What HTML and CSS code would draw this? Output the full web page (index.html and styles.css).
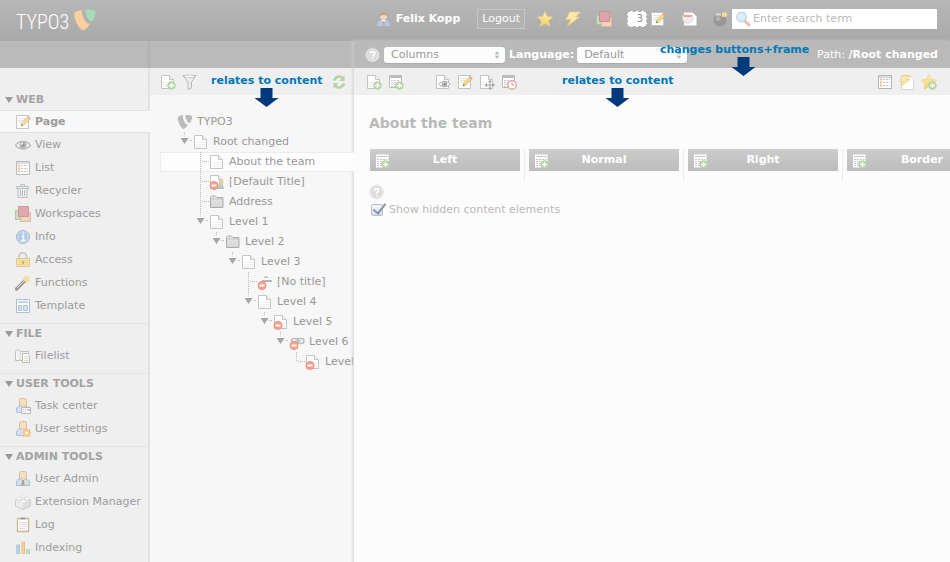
FILE: index.html
```html
<!DOCTYPE html>
<html lang="en">
<head>
<meta charset="utf-8">
<title>TYPO3 Backend</title>
<link rel="stylesheet" href="styles.css">
</head>
<body>
<svg class="sprite" aria-hidden="true">
  <defs>
    <linearGradient id="g-star" x1="0" y1="0" x2="0" y2="1"><stop offset="0" stop-color="#fdf0b0"/><stop offset="1" stop-color="#f3cf63"/></linearGradient>
    <linearGradient id="g-fold" x1="0" y1="0" x2="0" y2="1"><stop offset="0" stop-color="#e9e9e9"/><stop offset="1" stop-color="#d6d6d6"/></linearGradient>
  </defs>
  <symbol id="sheet" viewBox="0 0 16 16"><path d="M1.500 1.500H9.500L13.500 5.500V14.500H1.500Z" fill="#fff" stroke="#c3c3c3"/><path d="M9.500 1.500V5.500H13.500" fill="#f2f2f2" stroke="#c3c3c3"/><path d="M3 8.500h9M3 10.500h9M3 12.500h9" stroke="#eee"/></symbol>
  <symbol id="plus" viewBox="0 0 16 16"><circle cx="11.500" cy="11.500" r="4.200" fill="#b5d5a4"/><path d="M11.500 9v5M9 11.500h5" stroke="#fff" stroke-width="1.400"/></symbol>
  <symbol id="deny" viewBox="0 0 16 16"><circle cx="5" cy="11.500" r="4" fill="#f2a596" stroke="#ea9080"/><path d="M2.500 11.500h5" stroke="#fff" stroke-width="1.800"/></symbol>
  <symbol id="grid" viewBox="0 0 16 16"><path d="M1.500 1.500h12v12h-12z" fill="#fff" stroke="#bcbcbc"/><path d="M2 3h11" stroke="#bcbcbc" stroke-width="2"/><path d="M3 6.500h9M3 8.500h9M3 10.500h9M3 12.500h6" stroke="#c9c9c9" stroke-dasharray="2 1"/></symbol>
  <symbol id="page-new" viewBox="0 0 16 16"><use href="#sheet"/><use href="#plus"/></symbol>
  <symbol id="page-off" viewBox="0 0 16 16"><use href="#sheet"/><use href="#deny"/></symbol>
  <symbol id="page-group" viewBox="0 0 16 16"><use href="#sheet"/><circle cx="12" cy="8" r="2.500" fill="#e8cba8"/><path d="M8 15c0-6 7-6 7 0z" fill="#aac6de"/><path d="M8 12l3-3 2 3-2 3z" fill="#b9d4a2"/><use href="#deny"/></symbol>
  <symbol id="grid-new" viewBox="0 0 16 16"><use href="#grid"/><use href="#plus"/></symbol>
  <symbol id="col-new" viewBox="0 0 16 16"><path d="M2 1.500h12.500v13H2z" fill="#fff"/><path d="M3 3.500h10.500" stroke="#c6c6c6"/><path d="M3 6.500h10.500M3 8.500h10.500M3 10.500h10.500M3 12.500h8" stroke="#c6c6c6" stroke-dasharray="2 1"/><use href="#plus"/></symbol>
  <symbol id="pencil" viewBox="0 0 16 16"><path d="M6 12l1-3.500 6-6 2.200 2.200-6 6z" fill="#f6dc8b" stroke="#c8a85c" stroke-width=".7"/><path d="M12 3.500l1.500-1.500 2.200 2.200L14.200 5.700z" fill="#eba9a0"/><path d="M6 12l.6-2L8 11.400z" fill="#777"/></symbol>
  <symbol id="page-edit" viewBox="0 0 16 16"><path d="M1.500 1.500h12v13h-12z" fill="#fff" stroke="#c2c2c2"/><path d="M3 4.500h7M3 6.500h5M3 8.500h3" stroke="#e4e4e4"/><use href="#pencil"/></symbol>
  <symbol id="eye" viewBox="0 0 16 16"><path d="M.600 8.300C4 3 12 3 15.400 8.300 12 13 4 13 .600 8.300Z" fill="#f7f7f7" stroke="#b0b0b0" stroke-width="1.300"/><circle cx="8" cy="8" r="3.600" fill="#b3b3b3"/><circle cx="8" cy="8" r="1.700" fill="#8d8d8d"/><circle cx="7" cy="6.800" r="1" fill="#f2f2f2"/></symbol>
  <symbol id="page-view" viewBox="0 0 16 16"><use href="#sheet"/><svg x="3" y="4" width="13" height="12"><use href="#eye"/></svg></symbol>
  <symbol id="page-move" viewBox="0 0 16 16"><use href="#sheet"/><path d="M11 7v8M7 11h8" stroke="#a2a2a2"/><path d="M11 5.800l2 2.200H9zM11 16l2-2.200H9zM5.800 11L8 9v4zM16 11l-2.200-2v4z" fill="#a2a2a2"/></symbol>
  <symbol id="history" viewBox="0 0 16 16"><use href="#grid"/><circle cx="11" cy="11" r="4.200" fill="#fff" stroke="#eca296" stroke-width="1.400"/><path d="M11 8.500V11h2" fill="none" stroke="#999"/></symbol>
  <symbol id="funnel" viewBox="0 0 16 16"><path d="M1 1.500H14L9.500 8v6L6 15.500V8Z" fill="#ececec" stroke="#b7b7b7"/><ellipse cx="7.500" cy="2.300" rx="6" ry="1.200" fill="#fff" stroke="#bdbdbd" stroke-width=".8"/></symbol>
  <symbol id="refresh" viewBox="0 0 16 16"><path d="M3 6.500C5 1.500 10 1.500 12 4.500M13 9.500C11 14.500 6 14.500 4 11.500" fill="none" stroke="#b5d3a3" stroke-width="2.600"/><path d="M13.500 1.500V7H8.500zM2.500 14.500V9h5z" fill="#b5d3a3"/></symbol>
  <symbol id="list" viewBox="0 0 16 16"><path d="M1.500 1.500h13v13h-13z" fill="#fff" stroke="#b5b5b5"/><path d="M2 3h12" stroke="#c4d2dd" stroke-width="1.500"/><path d="M3 5.500h2M3 8.500h2M3 11.500h2" stroke="#f3bd80" stroke-width="2"/><path d="M6 5.500h7M6 8.500h7M6 11.500h7" stroke="#c2c2c2" stroke-dasharray="2 1"/></symbol>
  <symbol id="trash" viewBox="0 0 16 16"><path d="M5.500 3V1.500h4V3M1.500 3.500h12v2h-12zM3 6v8.500h9V6M5.500 7v6M7.500 7v6M9.500 7v6" fill="none" stroke="#b5b9bf"/></symbol>
  <symbol id="spaces" viewBox="0 0 16 16"><path d="M.500 4.500h10v9h-10z" fill="#c7dcc1" stroke="#a8c3a2"/><path d="M5.500 6.500h10v9h-10z" fill="#f2d2b8" stroke="#dbb697"/><path d="M3.500.500h10v10h-10z" fill="#dfa3aa" stroke="#cb8f97"/></symbol>
  <symbol id="info" viewBox="0 0 16 16"><circle cx="8" cy="8" r="6.500" fill="#a9c7e8" stroke="#9cb3cf"/><circle cx="8" cy="8" r="5.300" fill="none" stroke="#dbe8f5" stroke-width=".8"/><path d="M6.500 7H8.500v4M6.300 11.400h4M7.500 4.500h1.500" fill="none" stroke="#fff" stroke-width="1.500"/></symbol>
  <symbol id="lock" viewBox="0 0 16 16"><path d="M4 7V4.500a3.500 3.500 0 0 1 7.500 0V7" fill="none" stroke="#c9c9c9" stroke-width="2"/><path d="M1.500 6.500h13v8h-13z" fill="#f9e3a4" stroke="#dfc389"/><path d="M3 8.500h10M3 10.500h10M3 12.500h10" stroke="#f1cf80"/><path d="M7 9h2v3H7z" fill="#c7ab73"/></symbol>
  <symbol id="wand" viewBox="0 0 16 16"><path d="M1.500 14L10 5.500" stroke="#8d8d8d" stroke-width="3.200" stroke-linecap="round"/><path d="M2 13L9.500 5.500" stroke="#e2e2e2"/><path d="M11 0l1 2.500L15 1l-1.300 3L16 5.500l-3 .5-.5 3-2-2.500L8 6l1.500-2L8.500 2z" fill="#f9dd8e"/></symbol>
  <symbol id="template" viewBox="0 0 16 16"><path d="M1.500 1.500h13v13h-13z" fill="#fff" stroke="#a3b9d6"/><path d="M3 4h10" stroke="#bcd2ee" stroke-width="2"/><path d="M3.500 7.500h3v5h-3zM8.500 7.500h4v5h-4z" fill="#cfe0f5" stroke="#a3bbdc"/></symbol>
  <symbol id="folder" viewBox="0 0 16 16"><path d="M1.500 13.500v-10l1-1.500h4l1.500 1.500h6v10z" fill="url(#g-fold)" stroke="#ababab"/><path d="M2 5h12" stroke="#c4c4c4"/></symbol>
  <symbol id="files" viewBox="0 0 16 16"><path d="M.500 12.500v-9l1-1.500h3l1 1.500h8v9z" fill="#f5f5f5" stroke="#bcbcbc"/><path d="M5 3.500v9" stroke="#d0d0d0"/><path d="M7.500 5.500h5l2 2v7h-7z" fill="#fff" stroke="#b5b5b5"/><path d="M9 8.500h1M9 10.500h1M9 12.500h1" stroke="#f0bd80"/><path d="M11 8.500h2M11 10.500h2M11 12.500h2" stroke="#bcc9b0"/></symbol>
  <symbol id="user" viewBox="0 0 16 16"><path d="M1.500 14.500V10L4 8h7l3.500 2v4.500z" fill="#cfe0f2" stroke="#a5bedb"/><rect x="4.500" y=".500" width="7" height="7.500" rx="2" fill="#f8dec0" stroke="#dcb48c"/><path d="M6.500 8.500L8 10l1.500-1.500" fill="#fff"/></symbol>
  <symbol id="user-task" viewBox="0 0 16 16"><use href="#user"/><path d="M6.500 9.500h9v6h-9z" fill="#fff" stroke="#b4b4b4"/><path d="M8 11.500h4M8 13.500h4" stroke="#a9b8cc" stroke-dasharray="1 1"/><path d="M12.500 11h2v2h-2z" fill="#ec8f8f"/></symbol>
  <symbol id="user-set" viewBox="0 0 16 16"><use href="#user"/><path d="M11.500 7.500l1.200 1.500 2.300-.500-.500 2.300 1.500 1.200-1.500 1.200.5 2.300-2.300-.5-1.200 1.500-1.200-1.500-2.300.5.500-2.300L7 12l1.500-1.200L8 8.500l2.300.5z" fill="#f7cb86" stroke="#e9b168" stroke-width=".5"/><circle cx="11.500" cy="12" r="1.200" fill="#fff"/></symbol>
  <symbol id="user-admin" viewBox="0 0 16 16"><use href="#user"/><path d="M7 9h2l.7 5.500H6.500z" fill="#b69a72"/></symbol>
  <symbol id="felix" viewBox="0 0 16 16"><path d="M1 15c0-5 3-6 6.500-6s6.500 1 6.500 6z" fill="#aecbe8"/><path d="M5.500 9l2 3 2-3z" fill="#fff"/><path d="M7 10h1.200l.8 4.500H6.500z" fill="#d99b8b"/><circle cx="7.500" cy="5.500" r="3.500" fill="#f0d3b8"/><path d="M3.500 5.500C3 0 12 0 11.500 5.500 10 3.500 6 3.500 3.500 5.500Z" fill="#c2a184"/></symbol>
  <symbol id="brick" viewBox="0 0 16 16"><path d="M.500 6L8 3.500l7.500 2.500v6L8 15.500.500 12z" fill="#dedede" stroke="#c8c8c8"/><path d="M1 6.300L8 9l7-2.700L8 4z" fill="#f8f8f8"/><path d="M1 6.500L8 9v6L1 12z" fill="#ebebeb"/><path d="M5.700 2.200v2.300c0 1 4.600 1 4.600 0V2.200M2 4.500v2c0 1 4.500 1 4.500 0v-2M9.500 4.500v2c0 1 4.500 1 4.500 0v-2" fill="#ececec" stroke="#d0d0d0" stroke-width=".6"/><ellipse cx="8" cy="2.200" rx="2.300" ry="1.200" fill="#fff" stroke="#ccc" stroke-width=".6"/><ellipse cx="4.200" cy="4.500" rx="2.300" ry="1.200" fill="#fff" stroke="#ccc" stroke-width=".6"/><ellipse cx="11.700" cy="4.500" rx="2.300" ry="1.200" fill="#fff" stroke="#ccc" stroke-width=".6"/></symbol>
  <symbol id="log" viewBox="0 0 16 16"><path d="M2.500 1.500h11v13h-11z" fill="#fff" stroke="#c9b387" stroke-width="1.300"/><path d="M5.500 1.500h5" stroke="#999" stroke-width="2"/><path d="M4.500 5.500h7M4.500 7.500h7M4.500 9.500h7M4.500 11.500h5" stroke="#b9bdc6" stroke-dasharray="1 1"/></symbol>
  <symbol id="bars" viewBox="0 0 16 16"><path d="M1 4.500h4v9.500H1z" fill="#b2cdea"/><path d="M6 1.500h4V14H6z" fill="#f7c98e"/><path d="M11 9h4v5h-4z" fill="#c0dab4"/><path d="M4.500 5v9M9.500 2v12M14.500 9.500V14" stroke="#999" stroke-opacity=".3"/></symbol>
  <symbol id="star" viewBox="0 0 16 16"><path d="M8 .500l2.300 5 5.300.600-4 3.700 1.200 5.500L8 12.600l-4.800 2.700 1.200-5.500-4-3.700 5.300-.600z" fill="url(#g-star)" stroke="#e9cf83" stroke-width=".7"/></symbol>
  <symbol id="star-new" viewBox="0 0 16 16"><use href="#star"/><use href="#plus"/></symbol>
  <symbol id="bolt" viewBox="0 0 16 16"><path d="M4.500 1h11L10.500 6h4L2.500 15l3.500-6.500H.8z" fill="#f9e9ad" stroke="#edc774" stroke-width=".9"/></symbol>
  <symbol id="page-bolt" viewBox="0 0 16 16"><path d="M2.500 1.500h8l4 4v10h-12z" fill="#fff" stroke="#d6d6d6"/><svg x="0" y="1" width="12" height="12"><use href="#bolt"/></svg></symbol>
  <symbol id="page-cup" viewBox="0 0 16 16"><path d="M3 1.500h8.500l4 4v9H3z" fill="#fff"/><path d="M1 4.500h11l-1 5.500-3 2H5L2 10z" fill="#eee" stroke="#c9c9c9" stroke-width=".7"/><ellipse cx="6.500" cy="5" rx="4.500" ry="1.300" fill="#d9aaa0"/></symbol>
  <symbol id="bomb" viewBox="0 0 16 16"><circle cx="8" cy="9" r="6.500" fill="#979797"/><circle cx="6" cy="7.500" r="2.500" fill="#b2b2b2"/><path d="M4 3.500h5" stroke="#ddd" stroke-width="2"/><path d="M10 3l.5-2L12 2l2-1.500.3 2L16 4l-2 .7L13.500 7 12 5.500 9.500 6z" fill="#f7dc95"/></symbol>
  <symbol id="lens" viewBox="0 0 16 16"><path d="M9.500 9.500L14 14" stroke="#f0c1a4" stroke-width="3" stroke-linecap="round"/><circle cx="6.500" cy="6" r="4.800" fill="#dcedfb" stroke="#bed2e7" stroke-width="1.300"/></symbol>
  <symbol id="help" viewBox="0 0 16 16"><circle cx="7.500" cy="8" r="6.300" fill="#dcdcdc" stroke="#ececec"/><circle cx="7.500" cy="8" r="7" fill="none" stroke="#d4d4d4" stroke-width=".5"/><path d="M5.500 6.500C5.500 4 9.800 4 9.800 6.400 9.800 8 7.700 8 7.700 9.600M7.700 10.700v1.500" fill="none" stroke="#fff" stroke-width="1.700"/></symbol>
  <symbol id="swirl" viewBox="0 0 16 16"><path d="M11.200 10.300c-.3.100-.5.100-.8.100-2.300 0-4.600-5.700-4.600-8 0-.8.200-1.100.5-1.300C3.800 1.400 2 2.100 1.100 3 .9 3.300.8 3.800.8 4.400c0 3.300 3.500 10.500 6 10.500 1.200 0 3.100-1.900 4.400-4.600"/><path class="tip" d="M10 .900c3 0 5 .500 5 2 0 2.800-1.800 6.200-2.700 6.200-1.700 0-4-4.700-4-7 0-1 .500-1.200 1.700-1.200"/></symbol>
  <symbol id="divider" viewBox="0 0 16 16"><path d="M5 7h10" stroke="#b5b5b5" stroke-width="2"/><path d="M6 4l3-2.500L12 4z" fill="#c4c4c4"/><use href="#deny"/></symbol>
  <symbol id="chain" viewBox="0 0 16 16"><rect x="2.500" y="4.500" width="7" height="5" rx="2.500" fill="none" stroke="#bcbcbc" stroke-width="1.500"/><rect x="8.500" y="4.500" width="6.500" height="5" rx="2.500" fill="none" stroke="#bcbcbc" stroke-width="1.500"/><path d="M6 7h6" stroke="#bcbcbc"/><use href="#deny"/></symbol>
  <symbol id="open" viewBox="0 0 16 20"><path d="M7.500 0v4" stroke="#b9b9b9" stroke-dasharray="1 1"/><path d="M12 8.500h4" stroke="#b9b9b9" stroke-dasharray="1 1"/><path d="M3.500 6h8L7.500 12z" fill="#a6a6a6"/></symbol>
  <symbol id="leaf" viewBox="0 0 16 20"><path d="M7.500 0v20M9 9.500h7" stroke="#b9b9b9" stroke-dasharray="1 1"/></symbol>
  <symbol id="last" viewBox="0 0 16 20"><path d="M7.500 0v10M9 9.500h7" stroke="#b9b9b9" stroke-dasharray="1 1"/></symbol>
  <symbol id="updown" viewBox="0 0 8 10"><path d="M1 4l3-4 3 4zM1 6l3 4 3-4z" fill="#b5b5b5"/></symbol>
  <symbol id="arrow" viewBox="0 0 25 19"><path d="M6.500 0h12v10h6L12.500 19 .500 10h6z" fill="#003a7d"/></symbol>
</svg>

<header class="topbar">
  <a class="logo" href="#"><span>TYPO3</span><svg class="logo-mark"><use href="#swirl"/></svg></a>
  <div class="tools">
    <span class="who"><svg class="icon"><use href="#felix"/></svg><b>Felix Kopp</b></span>
    <button class="logout" type="button">Logout</button>
    <div class="pair">
      <button class="tool" type="button" aria-label="Bookmarks"><svg class="icon"><use href="#star"/></svg></button>
      <button class="tool" type="button" aria-label="Clear cache"><svg class="icon"><use href="#bolt"/></svg></button>
    </div>
    <button class="tool" type="button" aria-label="Workspaces"><svg class="icon"><use href="#spaces"/></svg></button>
    <button class="tool open-docs" type="button" aria-label="Open documents"><span class="count">3</span><svg class="icon"><use href="#page-edit"/></svg></button>
    <button class="tool" type="button" aria-label="Tasks"><svg class="icon"><use href="#page-cup"/></svg></button>
    <div class="find">
      <button class="tool" type="button" aria-label="Debug"><svg class="icon"><use href="#bomb"/></svg></button>
      <label class="search"><svg class="icon"><use href="#lens"/></svg><input type="search" placeholder="Enter search term" aria-label="Search"></label>
    </div>
  </div>
</header>

<div class="workspace">
  <nav class="modules">
    <div class="bar"></div>
    <section>
      <h2>WEB</h2>
      <a class="current" href="#"><svg class="icon"><use href="#page-edit"/></svg>Page</a>
      <a href="#"><svg class="icon"><use href="#eye"/></svg>View</a>
      <a href="#"><svg class="icon"><use href="#list"/></svg>List</a>
      <a href="#"><svg class="icon"><use href="#trash"/></svg>Recycler</a>
      <a href="#"><svg class="icon"><use href="#spaces"/></svg>Workspaces</a>
      <a href="#"><svg class="icon"><use href="#info"/></svg>Info</a>
      <a href="#"><svg class="icon"><use href="#lock"/></svg>Access</a>
      <a href="#"><svg class="icon"><use href="#wand"/></svg>Functions</a>
      <a href="#"><svg class="icon"><use href="#template"/></svg>Template</a>
    </section>
    <section>
      <h2>FILE</h2>
      <a href="#"><svg class="icon"><use href="#files"/></svg>Filelist</a>
    </section>
    <section>
      <h2>USER TOOLS</h2>
      <a href="#"><svg class="icon"><use href="#user-task"/></svg>Task center</a>
      <a href="#"><svg class="icon"><use href="#user-set"/></svg>User settings</a>
    </section>
    <section>
      <h2>ADMIN TOOLS</h2>
      <a href="#"><svg class="icon"><use href="#user-admin"/></svg>User Admin</a>
      <a href="#"><svg class="icon"><use href="#brick"/></svg>Extension Manager</a>
      <a href="#"><svg class="icon"><use href="#log"/></svg>Log</a>
      <a href="#"><svg class="icon"><use href="#bars"/></svg>Indexing</a>
    </section>
  </nav>

  <aside class="tree">
    <div class="bar"></div>
    <div class="toolbar">
      <button class="tool" type="button" aria-label="New page"><svg class="icon"><use href="#page-new"/></svg></button>
      <button class="tool" type="button" aria-label="Filter"><svg class="icon"><use href="#funnel"/></svg></button>
      <button class="tool end" type="button" aria-label="Refresh"><svg class="icon"><use href="#refresh"/></svg></button>
    </div>
    <ul>
      <li class="d0"><svg class="twig"></svg><svg class="icon grey"><use href="#swirl"/></svg><span>TYPO3</span></li>
      <li class="d1"><svg class="twig"><use href="#open"/></svg><svg class="icon"><use href="#sheet"/></svg><span>Root changed</span></li>
      <li class="d2 selected"><svg class="twig"><use href="#leaf"/></svg><svg class="icon"><use href="#sheet"/></svg><span>About the team</span></li>
      <li class="d2"><svg class="twig"><use href="#leaf"/></svg><svg class="icon"><use href="#page-group"/></svg><span>[Default Title]</span></li>
      <li class="d2"><svg class="twig"><use href="#leaf"/></svg><svg class="icon"><use href="#folder"/></svg><span>Address</span></li>
      <li class="d2"><svg class="twig"><use href="#open"/></svg><svg class="icon"><use href="#sheet"/></svg><span>Level 1</span></li>
      <li class="d3"><svg class="twig"><use href="#open"/></svg><svg class="icon"><use href="#folder"/></svg><span>Level 2</span></li>
      <li class="d4"><svg class="twig"><use href="#open"/></svg><svg class="icon"><use href="#sheet"/></svg><span>Level 3</span></li>
      <li class="d5"><svg class="twig"><use href="#leaf"/></svg><svg class="icon"><use href="#divider"/></svg><span>[No title]</span></li>
      <li class="d5"><svg class="twig"><use href="#open"/></svg><svg class="icon"><use href="#sheet"/></svg><span>Level 4</span></li>
      <li class="d6"><svg class="twig"><use href="#open"/></svg><svg class="icon"><use href="#page-off"/></svg><span>Level 5</span></li>
      <li class="d7"><svg class="twig"><use href="#open"/></svg><svg class="icon"><use href="#chain"/></svg><span>Level 6</span></li>
      <li class="d8"><svg class="twig"><use href="#last"/></svg><svg class="icon"><use href="#page-off"/></svg><span>Level</span></li>
    </ul>
  </aside>

  <main class="content">
    <div class="bar">
      <svg class="icon"><use href="#help"/></svg>
      <span class="pick wide"><select aria-label="View"><option>Columns</option></select><svg class="updown"><use href="#updown"/></svg></span>
      <label for="language">Language:</label>
      <span class="pick"><select id="language"><option>Default</option></select><svg class="updown"><use href="#updown"/></svg></span>
      <span class="path">Path: <b>/Root changed</b></span>
    </div>
    <div class="toolbar">
      <button class="tool" type="button" aria-label="New page"><svg class="icon"><use href="#page-new"/></svg></button>
      <button class="tool" type="button" aria-label="New content"><svg class="icon"><use href="#grid-new"/></svg></button>
      <button class="tool apart" type="button" aria-label="View page"><svg class="icon"><use href="#page-view"/></svg></button>
      <button class="tool" type="button" aria-label="Edit page"><svg class="icon"><use href="#page-edit"/></svg></button>
      <button class="tool" type="button" aria-label="Move page"><svg class="icon"><use href="#page-move"/></svg></button>
      <button class="tool" type="button" aria-label="History"><svg class="icon"><use href="#history"/></svg></button>
      <button class="tool end" type="button" aria-label="List view"><svg class="icon"><use href="#list"/></svg></button>
      <button class="tool" type="button" aria-label="Clear page cache"><svg class="icon"><use href="#page-bolt"/></svg></button>
      <button class="tool" type="button" aria-label="Add bookmark"><svg class="icon"><use href="#star-new"/></svg></button>
    </div>
    <div class="page">
      <h1>About the team</h1>
      <div class="columns">
        <div><h3><svg class="icon"><use href="#col-new"/></svg>Left</h3></div>
        <div><h3><svg class="icon"><use href="#col-new"/></svg>Normal</h3></div>
        <div><h3><svg class="icon"><use href="#col-new"/></svg>Right</h3></div>
        <div><h3><svg class="icon"><use href="#col-new"/></svg>Border</h3></div>
      </div>
      <svg class="icon"><use href="#help"/></svg>
      <label class="hidden-toggle"><input type="checkbox" checked>Show hidden content elements</label>
    </div>
  </main>
</div>

<div class="callout on-tree">relates to content<svg><use href="#arrow"/></svg></div>
<div class="callout on-content">relates to content<svg><use href="#arrow"/></svg></div>
<div class="callout on-frame">changes buttons+frame<svg><use href="#arrow"/></svg></div>
</body>
</html>
```
FILE: styles.css
```css
* { box-sizing: border-box; }
body {
  margin: 0;
  min-height: 100vh;
  display: flex;
  flex-direction: column;
  overflow: hidden;
  font: 11px/20px "DejaVu Sans", Verdana, sans-serif;
  color: #9c9c9c;
  background: #fcfcfc;
}
h1, h2, h3, ul { margin: 0; padding: 0; }
a { color: inherit; text-decoration: none; }
button, input, select { font: inherit; color: inherit; margin: 0; }
.sprite { position: absolute; width: 0; height: 0; }
.icon { flex: none; width: 16px; height: 16px; display: block; }
.tool { display: flex; align-items: center; padding: 0; border: 0; background: none; }

.topbar {
  display: flex;
  justify-content: space-between;
  height: 41px;
  padding: 0 13px 4px 16px;
  background: linear-gradient(#b7b7b7, #a9a9a9);
}
.logo { display: flex; align-items: center; gap: 4px; color: #fff; font: 300 20px/30px "Roboto Condensed", "Liberation Sans Narrow", Roboto, sans-serif; padding-top: 7px; }
.logo-mark { --tip: #a5dcb5; width: 24px; height: 24px; margin-top: -5px; fill: #fbcfa2; }
.tip { fill: var(--tip, inherit); }
.tools { display: flex; align-items: center; gap: 15px; color: #fff; }
.who { display: flex; align-items: center; gap: 4px; padding-right: 2px; }
.pair { display: flex; gap: 12px; margin-left: -3px; }
.find { display: flex; align-items: center; gap: 4px; }
.logout { height: 20px; padding: 0 4px; border: 1px solid #c6c6c6; background: #b2b2b2; line-height: 18px; }
.open-docs { gap: 3px; }
.count { width: 20px; height: 16px; padding-left: 6px; border: 1px dashed #b0b0b0; background: #fff; color: #8c8c8c; font-size: 10px; line-height: 14px; }
.search { display: flex; align-items: center; gap: 2px; width: 205px; height: 20px; padding: 0 3px; background: #fff; }
.search input { flex: 1; min-width: 0; padding: 0; border: 0; outline: 0; background: none; }
.search input::placeholder { color: #b9b9b9; }

.workspace { flex: 1; display: grid; grid-template-columns: 150px 204px minmax(0, 1fr); }
.bar { display: flex; align-items: center; height: 27px; background: #bababa; }
.toolbar { display: flex; align-items: center; gap: 6px; height: 27px; background: #efefef; }
.end { margin-left: auto; }

.modules { background: #efefef; border-right: 2px solid #e2e2e2; }
.modules .bar { margin-right: -2px; margin-bottom: 21px; border-right: 2px solid #b2b2b2; }
.modules section { padding-bottom: 6px; border-top: 1px solid #e4e4e4; }
.modules .bar + section { border-color: transparent; }
.modules .icon { opacity: .9; }
.modules h2 { display: flex; align-items: center; gap: 3px; height: 20px; padding-left: 5px; font-size: 11px; color: #a3a3a3; }
.modules h2::before { content: ""; border: 4px solid transparent; border-top: 6px solid #999; border-bottom: 0; }
.modules a { display: flex; align-items: center; gap: 4px; height: 23px; padding-left: 15px; white-space: nowrap; }
.modules .current { margin-right: -2px; border: 1px solid #e2e2e2; border-width: 1px 0; background: #f8f8f8; font-weight: bold; }

.tree { background: #f7f7f7; }
.tree .toolbar { padding: 0 7px 0 10px; }
.tree ul { padding: 17px 0 0 10px; list-style: none; }
.tree li { display: flex; align-items: center; gap: 4px; height: 20px; border: 1px solid transparent; border-right: 0; white-space: nowrap; color: #989898; }
.tree .selected { position: relative; border-color: #ececec; background: #fdfdfd; }
.twig { flex: none; width: 16px; height: 20px; margin-right: -4px; }
.grey { fill: #bbb; }
.d1 { padding-left: 16px; }
.d2 { padding-left: 32px; }
.d3 { padding-left: 48px; }
.d4 { padding-left: 64px; }
.d5 { padding-left: 80px; }
.d6 { padding-left: 96px; }
.d7 { padding-left: 112px; }
.d8 { padding-left: 128px; }

.content { min-width: 0; overflow: hidden; background: #fcfcfc; box-shadow: -1px 0 3px #d0d0d0; }
.content .bar { gap: 3px; padding: 0 12px 0 11px; color: #fff; }
.content .bar label { padding-left: 1px; font-weight: bold; }
.pick { display: flex; align-items: center; width: 110px; height: 16px; border-radius: 3px; background: #fcfcfc; box-shadow: 0 1px 1px #aaa; }
.pick.wide { width: 121px; }
.pick select { flex: 1; min-width: 0; height: 16px; padding: 0 0 0 7px; border: 0; appearance: none; background: none; color: #999; line-height: 16px; }
.updown { width: 6px; height: 8px; margin-right: 5px; }
.path { margin-left: auto; }
.content .toolbar { padding: 0 13px 0 12px; }
.apart { margin-left: 25px; }
.page { padding: 16px 0 0 15px; }
h1 { font-size: 14px; line-height: 24px; color: #b9b9b9; }
.columns { display: flex; margin: 14px 0 3px 1px; }
.columns > div { flex: none; width: 159px; height: 32px; padding-right: 4px; }
.columns > div + div { padding-left: 4px; border-left: 1px solid #ececec; }
.columns > div:first-child { width: 154px; }
.columns h3 { position: relative; display: flex; justify-content: center; align-items: center; height: 22px; font-size: 11px; color: #fff; background: linear-gradient(#cdcdcd, #bcbcbc); }
.columns .icon { position: absolute; left: 4px; top: 4px; }
.hidden-toggle { display: flex; align-items: center; gap: 6px; color: #b9b9b9; padding-left: 2px; }
.hidden-toggle input { appearance: none; width: 12px; height: 12px; border: 1px solid #b4bfd0; border-radius: 2px; background: linear-gradient(#f4f8fd, #cfe2f6); }
.hidden-toggle input:checked::before { content: ""; display: block; width: 5px; height: 11px; margin: -4px 0 0 4px; border: solid #8d929c; border-width: 0 2px 2px 0; transform: rotate(38deg); }

.callout { position: absolute; display: flex; flex-direction: column; align-items: center; font-weight: bold; line-height: 18px; color: #0078b6; white-space: nowrap; }
.callout svg { width: 25px; height: 19px; margin-top: -2px; }
.on-tree { left: 211px; top: 72px; }
.on-content { left: 562px; top: 72px; }
.on-frame { left: 660px; top: 41px; }
.on-frame svg { margin-left: 18px; }
```
